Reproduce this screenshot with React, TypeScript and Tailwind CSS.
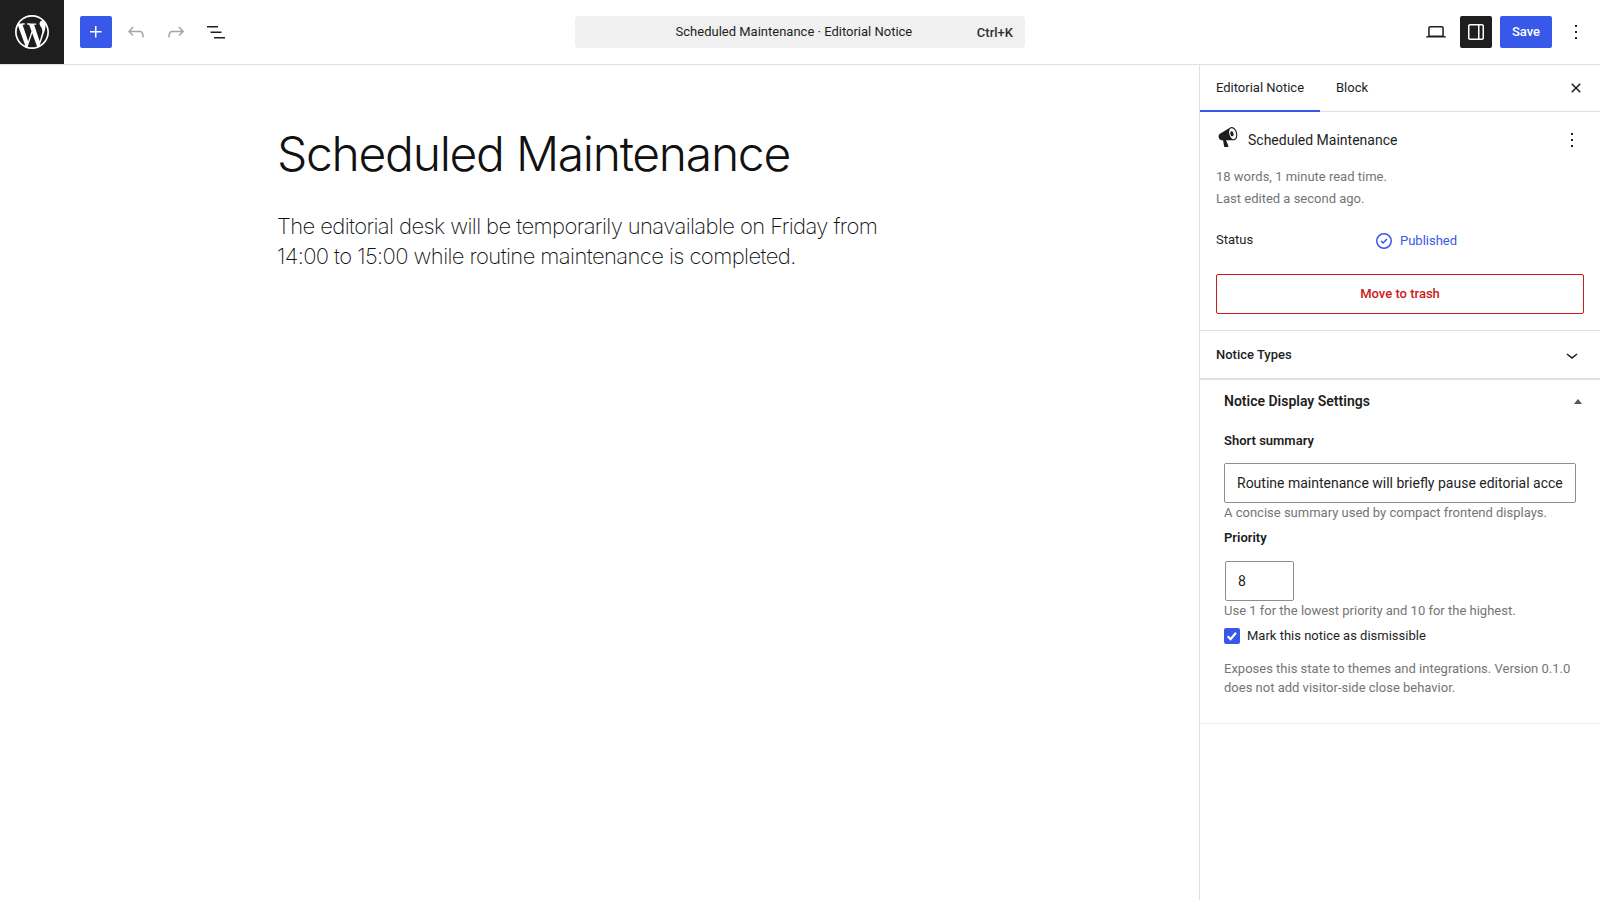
import { SiWordpress } from 'react-icons/si';

const kebab = 'M13 19h-2v-2h2v2zm0-6h-2v-2h2v2zm0-6h-2V5h2v2z';

function Icon({ d, className = '' }: { d: string; className?: string }) {
  return (
    <svg viewBox="0 0 24 24" width="24" height="24" fill="currentColor" className={className}>
      <path d={d} />
    </svg>
  );
}

function Header() {
  return (
    <header className="flex h-[65px] shrink-0 items-center border-b border-[#e0e0e0] bg-white">
      <div className="flex h-[64px] w-[64px] shrink-0 items-center justify-center bg-[#1e1e1e] text-white">
        <SiWordpress size={34} />
      </div>
      <button className="ml-4 flex h-8 w-8 items-center justify-center rounded-[2px] bg-[#3858e9] text-white">
        <Icon d="M11 12.5V17.5H12.5V12.5H17.5V11H12.5V6H11V11H6V12.5H11Z" />
      </button>
      <button className="ml-2 flex h-8 w-8 items-center justify-center text-[#a5a5a5]">
        <Icon d="M18.3 11.7c-.6-.6-1.4-.9-2.3-.9H6.7l2.9-3.3-1.1-1-4.5 5L8.5 16l1-1-2.7-2.7H16c.5 0 .9.2 1.3.5 1 1 1 3.4 1 4.5v.3h1.5v-.2c0-1.5 0-4.3-1.5-5.7z" />
      </button>
      <button className="ml-2 flex h-8 w-8 items-center justify-center text-[#a5a5a5]">
        <Icon d="M15.6 6.5l-1.1 1 2.9 3.3H8c-.9 0-1.7.3-2.3.9-1.4 1.5-1.4 4.2-1.4 5.6v.2h1.5v-.3c0-1.1 0-3.5 1-4.5.3-.3.7-.5 1.3-.5h9.2L14.5 15l1.1 1.1 4.6-4.6-4.6-5z" />
      </button>
      <button className="ml-2 flex h-8 w-8 items-center justify-center text-[#1e1e1e]">
        <Icon d="M3 6h11v1.5H3V6Zm3.5 5.5h11V13h-11v-1.5ZM21 17H10v1.5h11V17Z" />
      </button>
      <div className="ml-[343px] flex h-8 w-[450px] items-center rounded-[4px] bg-[#f0f0f0] pr-3 text-[13px] text-[#1e1e1e]">
        <span className="flex-1 pl-[36px] text-center">Scheduled Maintenance · Editorial Notice</span>
        <span className="pt-[1px] font-medium text-[#2f2f2f]">Ctrl+K</span>
      </div>
      <button className="ml-auto flex h-8 w-8 items-center justify-center text-[#1e1e1e]">
        <Icon d="M20.5 16h-.7V8c0-1.1-.9-2-2-2H6.2c-1.1 0-2 .9-2 2v8h-.7c-.8 0-1.5.7-1.5 1.5h20c0-.8-.7-1.5-1.5-1.5zM5.7 8c0-.3.2-.5.5-.5h11.6c.3 0 .5.2.5.5v7.6H5.7V8z" />
      </button>
      <button className="ml-2 flex h-8 w-8 items-center justify-center rounded-[2px] bg-[#1e1e1e] text-white">
        <Icon d="M18 4H6c-1.1 0-2 .9-2 2v12c0 1.1.9 2 2 2h12c1.1 0 2-.9 2-2V6c0-1.1-.9-2-2-2zm-4 14.5H6c-.3 0-.5-.2-.5-.5V6c0-.3.2-.5.5-.5h8v13zm4.5-.5c0 .3-.2.5-.5.5h-2.5v-13H18c.3 0 .5.2.5.5v12z" />
      </button>
      <button className="ml-2 h-8 w-[52px] rounded-[2px] bg-[#3858e9] text-[13px] font-medium text-white">Save</button>
      <button className="ml-2 mr-2 flex h-8 w-8 items-center justify-center text-[#1e1e1e]">
        <Icon d={kebab} />
      </button>
    </header>
  );
}

function Editor() {
  return (
    <main className="min-w-0 flex-1 bg-white pl-[277px] pt-[59px] text-[#111]" style={{ fontFamily: 'Inter, sans-serif' }}>
      <h1 className="text-[48px] font-light leading-[60px] tracking-[-0.027em]">Scheduled Maintenance</h1>
      <p className="mt-[27px] w-[610px] text-[22px] font-[250] leading-[30px] tracking-[-0.027em]">
        The editorial desk will be temporarily unavailable on Friday from 14:00 to 15:00 while routine maintenance is completed.
      </p>
    </main>
  );
}

function Sidebar() {
  return (
    <aside className="w-[401px] shrink-0 border-l border-[#e0e0e0] bg-white text-[13px] text-[#1e1e1e]">
      <div className="flex h-[47px] items-stretch border-b border-[#e0e0e0]">
        <div className="-mb-[1px] flex w-[120px] items-center justify-center border-b-2 border-[#3858e9] pt-[1px]">Editorial Notice</div>
        <div className="flex items-center pl-4">Block</div>
        <button className="ml-auto mr-3 flex w-6 items-center justify-center pb-[1px]">
          <svg viewBox="0 0 24 24" width="24" height="24" fill="currentColor">
            <path d="M12 13.06l3.712 3.713 1.061-1.06L13.061 12l3.712-3.712-1.06-1.06L12 10.938 8.288 7.227l-1.061 1.06L10.939 12l-3.712 3.712 1.06 1.061L12 13.061z" />
          </svg>
        </button>
      </div>

      <section className="border-b border-[#e0e0e0] px-4 pb-4 pt-4">
        <div className="flex h-6 items-center">
          <svg viewBox="0 0 20 20" width="22" height="22" fill="#1e1e1e" className="-mt-[6px] ml-[1px]">
            <path d="M18.15 5.94c.46 1.62.38 3.22-.02 4.48-.42 1.28-1.26 2.18-2.3 2.48-.16.06-.26.06-.4.06-.06.02-.12.02-.18.02-.06.02-.14.02-.22.02h-6.8l2.22 5.5c.02.14-.06.26-.14.34-.08.1-.24.16-.34.16H6.95c-.1 0-.26-.06-.34-.16-.08-.08-.16-.2-.14-.34l-1-5.5H4.25l-.02-.02c-.5.06-1.08-.18-1.54-.62s-.88-1.08-1.06-1.86c-.24-.8-.2-1.56-.02-2.2.18-.62.58-1.08 1.06-1.3l.02-.02 9-5.4c.1-.06.18-.1.24-.16.06-.04.14-.08.24-.12.16-.08.28-.12.5-.18 1.04-.3 2.24.1 3.22 1 .98.88 1.84 2.24 2.26 3.86zm-2.58 5.98h-.02c.4-.1.74-.34 1.04-.7.58-.7.86-1.76.86-3.04 0-.64-.1-1.3-.28-1.98-.34-1.36-1.02-2.5-1.78-3.24s-1.68-1.1-2.46-.88c-.82.22-1.4.96-1.7 2-.32 1.04-.28 2.36.06 3.72.38 1.36 1 2.5 1.8 3.24.78.74 1.62 1.1 2.48.88zm-2.54-7.08c.22-.04.42-.02.62.04.38.16.76.48 1.02 1s.42 1.2.42 1.78c0 .3-.04.56-.12.8-.18.48-.44.84-.86.94-.34.1-.8-.06-1.14-.4s-.64-.86-.78-1.5c-.18-.62-.12-1.24.02-1.72s.48-.84.82-.94z" />
          </svg>
          <span className="ml-[9px] pt-[1px] text-[14px]">Scheduled Maintenance</span>
          <Icon d={kebab} className="ml-auto" />
        </div>
        <div className="mt-[14px] text-[13px] leading-[22px] text-[#757575]">
          <div>18 words, 1 minute read time.</div>
          <div>Last edited a second ago.</div>
        </div>
        <div className="mt-[19px] flex h-6 items-center">
          <span className="-mt-[3px] w-[156px]">Status</span>
          <svg viewBox="0 0 24 24" width="24" height="24" fill="#3858e9">
            <path
              fillRule="evenodd"
              clipRule="evenodd"
              d="M12 18.5a6.5 6.5 0 1 1 0-13 6.5 6.5 0 0 1 0 13ZM4 12a8 8 0 1 1 16 0 8 8 0 0 1-16 0Zm11.53-1.47-1.06-1.06L11 12.94l-1.47-1.47-1.06 1.06L11 15.06l4.53-4.53Z"
            />
          </svg>
          <span className="ml-1 text-[#3858e9]">Published</span>
        </div>
        <button className="mt-[21px] h-[40px] w-full rounded-[2px] border border-[#cc1818] font-medium text-[#cc1818]">
          Move to trash
        </button>
      </section>

      <div className="flex h-[49px] items-center justify-between border-b-2 border-[#e0e0e0] pl-4 pr-4 font-medium">
        <span>Notice Types</span>
        <Icon d="M17.5 11.6L12 16l-5.5-4.4.9-1.2L12 14l4.5-3.6 1 1.2z" />
      </div>

      <section className="border-b border-[#f0f0f0] px-6 pb-[26px]">
        <div className="flex h-[42px] items-center justify-between">
          <span className="text-[14px] font-semibold">Notice Display Settings</span>
          <span className="mr-[-6px] h-0 w-0 border-x-[4px] border-b-[5px] border-x-transparent border-b-[#50575e]" />
        </div>
        <label className="mt-[11px] block text-[13px] font-semibold leading-[16px]">Short summary</label>
        <input
          readOnly
          value="Routine maintenance will briefly pause editorial access for a short time"
          className="mt-[14px] block h-[40px] w-full rounded-[2px] border border-[#8c8f94] px-3 text-[14px] text-[#1e1e1e] outline-none"
        />
        <p className="mt-[1px] text-[13px] leading-[18px] text-[#757575]">A concise summary used by compact frontend displays.</p>
        <label className="mt-[8px] block text-[13px] font-semibold leading-[16px]">Priority</label>
        <input
          readOnly
          value="8"
          className="ml-[1px] mt-[15px] block h-[40px] w-[69px] rounded-[2px] border border-[#8c8f94] px-3 text-[14px] text-[#1e1e1e] outline-none"
        />
        <p className="mt-[1px] text-[13px] leading-[18px] text-[#757575]">Use 1 for the lowest priority and 10 for the highest.</p>
        <div className="mt-[6px] flex items-center">
          <span className="flex h-4 w-4 items-center justify-center rounded-[2px] bg-[#3858e9] text-white">
            <svg viewBox="0 0 16 16" width="16" height="16" fill="none" stroke="currentColor" strokeWidth="2.2" className="shrink-0">
              <path d="M3.6 8.2l3 2.9 5.4-6.4" />
            </svg>
          </span>
          <span className="ml-[7px]">Mark this notice as dismissible</span>
        </div>
        <p className="mt-[13px] text-[13px] leading-[19px] text-[#757575]">
          Exposes this state to themes and integrations. Version 0.1.0 does not add visitor-side close behavior.
        </p>
      </section>
    </aside>
  );
}

export default function App() {
  return (
    <div className="flex h-[900px] w-[1600px] flex-col overflow-hidden bg-white" style={{ fontFamily: 'Roboto, sans-serif' }}>
      <Header />
      <div className="flex min-h-0 flex-1">
        <Editor />
        <Sidebar />
      </div>
    </div>
  );
}
